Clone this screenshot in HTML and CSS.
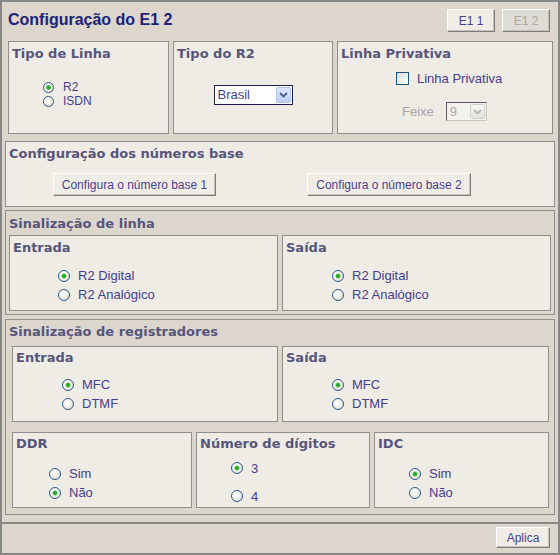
FILE: index.html
```html
<!DOCTYPE html>
<html lang="pt-BR">
<head>
<meta charset="utf-8">
<title>Configuração do E1 2</title>
<link rel="stylesheet" href="styles.css">
</head>
<body>
<div class="window">
  <header class="header">
    <h1 class="title">Configuração do E1 2</h1>
    <div class="tabs">
      <button class="btn btn-tab">E1 1</button>
      <button class="btn btn-tab" disabled>E1 2</button>
    </div>
  </header>

  <section class="row1">
    <div class="box">
      <h2 class="hd">Tipo de Linha</h2>
      <div class="opts opts-tight opts-tipo">
        <label class="opt"><input type="radio" name="tl" checked><span>R2</span></label>
        <label class="opt"><input type="radio" name="tl"><span>ISDN</span></label>
      </div>
    </div>
    <div class="box">
      <h2 class="hd">Tipo do R2</h2>
      <div class="select select-r2">
        <span class="sel-val">Brasil</span>
        <span class="sel-btn"><svg width="9" height="6" viewBox="0 0 9 6"><path d="M1 1 L4.5 4.5 L8 1" fill="none" stroke="#4a5f8c" stroke-width="1.8"/></svg></span>
      </div>
    </div>
    <div class="box">
      <h2 class="hd">Linha Privativa</h2>
      <label class="chk"><input type="checkbox"><span>Linha Privativa</span></label>
      <div class="feixe">
        <span class="feixe-lbl">Feixe</span>
        <div class="select select-dis">
          <span class="sel-val">9</span>
          <span class="sel-btn sel-btn-dis"><svg width="9" height="6" viewBox="0 0 9 6"><path d="M1 1 L4.5 4.5 L8 1" fill="none" stroke="#b8b8b8" stroke-width="1.8"/></svg></span>
        </div>
      </div>
    </div>
  </section>

  <section class="box wide base">
    <h2 class="hd">Configuração dos números base</h2>
    <div class="base-btns">
      <button class="btn btn-base">Configura o número base 1</button>
      <button class="btn btn-base btn-base2">Configura o número base 2</button>
    </div>
  </section>

  <section class="group linha">
    <h2 class="hd">Sinalização de linha</h2>
    <div class="pair">
      <div class="box sub">
        <h2 class="hd">Entrada</h2>
        <div class="opts opts-linha opts-l1">
          <label class="opt"><input type="radio" name="le" checked><span>R2 Digital</span></label>
          <label class="opt"><input type="radio" name="le"><span>R2 Analógico</span></label>
        </div>
      </div>
      <div class="box sub">
        <h2 class="hd">Saída</h2>
        <div class="opts opts-linha">
          <label class="opt"><input type="radio" name="ls" checked><span>R2 Digital</span></label>
          <label class="opt"><input type="radio" name="ls"><span>R2 Analógico</span></label>
        </div>
      </div>
    </div>
  </section>

  <section class="group regs">
    <h2 class="hd hd-regs">Sinalização de registradores</h2>
    <div class="pair pair-regs">
      <div class="box sub">
        <h2 class="hd">Entrada</h2>
        <div class="opts opts-regs">
          <label class="opt"><input type="radio" name="re" checked><span>MFC</span></label>
          <label class="opt"><input type="radio" name="re"><span>DTMF</span></label>
        </div>
      </div>
      <div class="box sub">
        <h2 class="hd">Saída</h2>
        <div class="opts opts-regs">
          <label class="opt"><input type="radio" name="rs" checked><span>MFC</span></label>
          <label class="opt"><input type="radio" name="rs"><span>DTMF</span></label>
        </div>
      </div>
    </div>
    <div class="triple">
      <div class="box sub">
        <h2 class="hd">DDR</h2>
        <div class="opts opts-ddr">
          <label class="opt"><input type="radio" name="ddr"><span>Sim</span></label>
          <label class="opt"><input type="radio" name="ddr" checked><span>Não</span></label>
        </div>
      </div>
      <div class="box sub">
        <h2 class="hd">Número de dígitos</h2>
        <div class="opts opts-dig">
          <label class="opt"><input type="radio" name="dig" checked><span>3</span></label>
          <label class="opt"><input type="radio" name="dig"><span>4</span></label>
        </div>
      </div>
      <div class="box sub">
        <h2 class="hd">IDC</h2>
        <div class="opts opts-idc">
          <label class="opt"><input type="radio" name="idc" checked><span>Sim</span></label>
          <label class="opt"><input type="radio" name="idc"><span>Não</span></label>
        </div>
      </div>
    </div>
  </section>

  <footer class="footer">
    <button class="btn btn-apply">Aplica</button>
  </footer>
</div>
</body>
</html>
```

FILE: styles.css
```css
html, body {
  margin: 0;
  padding: 0;
  background: #dcd6cc;
}

body {
  font-family: "Liberation Sans", Arial, sans-serif;
}

.window {
  width: 560px;
  height: 555px;
  box-sizing: border-box;
  border: 2px solid #878787;
  background: #dcd6cc;
  display: flex;
  flex-direction: column;
}

/* header */
.header {
  height: 39px;
  box-sizing: border-box;
  padding: 7px 8px 0 6px;
  display: flex;
  justify-content: space-between;
  align-items: flex-start;
}

.title {
  margin: 1px 0 0;
  font: bold 16px/19px "Liberation Sans", Arial, sans-serif;
  color: #1b237a;
}

.tabs {
  display: flex;
  gap: 7px;
}

/* buttons */
.btn {
  font: 12px/1 "Liberation Sans", Arial, sans-serif;
  color: #4b3f8c;
  background: #f0ede6;
  border: 1px solid;
  border-color: #ffffff #7c7c7c #7c7c7c #ffffff;
  box-shadow: inset -1px -1px 0 #c6c2b9;
  padding: 0;
  height: 23px;
  box-sizing: border-box;
  cursor: pointer;
}

.btn:disabled {
  background: #dedcd7;
  color: #a9a8a4;
  cursor: default;
}

.btn-tab {
  width: 48px;
}

/* generic boxes */
.box {
  background: #efebe5;
  border: 1px solid #8e8e8e;
  box-sizing: border-box;
  padding: 3px 3px 0;
}

.hd {
  margin: 0;
  font: bold 13px/17px "DejaVu Sans", Verdana, sans-serif;
  color: #56567c;
  white-space: nowrap;
}

/* radio lists */
.opts {
  display: flex;
  flex-direction: column;
}

.opt {
  display: flex;
  align-items: center;
  gap: 8px;
  height: 19px;
  font: 13px/19px "Liberation Sans", Arial, sans-serif;
  color: #45408a;
  white-space: nowrap;
}

.opt input {
  appearance: none;
  -webkit-appearance: none;
  flex: none;
  width: 12px;
  height: 12px;
  margin: 0;
  box-sizing: border-box;
  border: 1px solid #2a5a8c;
  border-radius: 50%;
  background: radial-gradient(circle at 35% 35%, #ffffff 0, #f3f2ec 45%, #d4d0c4 100%);
}

.opt input:checked {
  background:
    radial-gradient(circle, #1f9d1f 0, #31b031 1.6px, #8fd68f 2.4px, rgba(255,255,255,0) 3px),
    radial-gradient(circle at 35% 35%, #ffffff 0, #f3f2ec 45%, #d4d0c4 100%);
}

.opts-tight .opt {
  height: 14px;
  font-size: 12px;
  line-height: 14px;
  gap: 9px;
}

.opts-tight .opt input {
  width: 11px;
  height: 11px;
}

.opts-tipo { margin: 18px 0 0 31px; }
.opts-linha { margin: 10px 0 0 46px; }
.opts-l1 { margin-left: 45px; }
.opts-regs { margin: 9px 0 0 46px; }
.opts-ddr { margin: 12px 0 0 33px; }
.opts-idc { margin: 12px 0 0 31px; }
.opts-dig { margin: 2px 0 0 31px; }
.opts-dig .opt { height: 28px; }

/* row 1 */
.row1 {
  display: grid;
  grid-template-columns: 161px 160px 216px;
  gap: 4px;
  margin: 0 5px 0 6px;
  height: 93px;
}

.select {
  display: flex;
  align-items: center;
  box-sizing: border-box;
  height: 20px;
  border: 1px solid #1e1e4a;
  background: #ffffff;
}

.select-r2 {
  width: 79px;
  margin: 23px auto 0;
}

.sel-val {
  flex: 1;
  padding-left: 3px;
  font: 13px/16px "Liberation Sans", Arial, sans-serif;
  color: #45408a;
}

.sel-btn {
  flex: none;
  width: 15px;
  height: 16px;
  margin-right: 1px;
  box-sizing: border-box;
  border: 1px solid #b2c4f0;
  border-radius: 2px;
  background: linear-gradient(#dde7fd, #bccff8);
  display: flex;
  align-items: center;
  justify-content: center;
}

.chk {
  display: flex;
  align-items: center;
  gap: 8px;
  height: 13px;
  margin: 10px 0 0 55px;
  font: 13px/13px "Liberation Sans", Arial, sans-serif;
  color: #45408a;
  white-space: nowrap;
}

.chk input {
  appearance: none;
  -webkit-appearance: none;
  flex: none;
  width: 13px;
  height: 13px;
  margin: 0;
  box-sizing: border-box;
  border: 1px solid #1c5180;
  background: linear-gradient(135deg, #dcdbd4, #ffffff);
}

.feixe {
  display: flex;
  align-items: center;
  gap: 12px;
  margin: 17px 0 0 61px;
}

.feixe-lbl {
  font: 13px/19px "Liberation Sans", Arial, sans-serif;
  color: #a6a6a6;
}

.select-dis {
  width: 41px;
  height: 19px;
  border-color: #5c5c6c #c8c6bd #c8c6bd #5c5c6c;
  background: #f3f1ec;
}

.select-dis .sel-val {
  color: #a9a9a9;
}

.sel-btn-dis {
  height: 15px;
  border-color: #d2d1cb;
  background: linear-gradient(#f6f6f4, #e3e2dd);
}

/* wide sections */
.wide {
  margin: 0 3px;
}

.base {
  margin-top: 7px;
  height: 66px;
}

.base-btns {
  display: flex;
  gap: 91px;
  margin: 11px 0 0 44px;
}

.btn-base {
  width: 163px;
}

.btn-base2 {
  width: 164px;
}

.group {
  margin: 0 3px;
  border: 1px solid #8e8e8e;
  background: #dcd6cc;
  box-sizing: border-box;
}

.linha {
  margin-top: 3px;
  padding: 4px 3px 3px 3px;
}

.pair {
  display: grid;
  grid-template-columns: 269px 269px;
  gap: 4px;
  margin-top: 3px;
}

.sub {
  height: 76px;
}

.regs {
  margin-top: 4px;
  padding: 3px 5px 6px 6px;
}

.hd-regs {
  margin-left: -3px;
}

.pair-regs {
  grid-template-columns: 266px 267px;
  margin-top: 6px;
}

.regs .sub {
  padding-top: 2px;
}

.triple {
  display: grid;
  grid-template-columns: 180px 174px 175px;
  gap: 4px;
  margin-top: 10px;
}

/* footer */
.footer {
  margin-top: 7px;
  flex: 1;
  border-top: 2px solid #878787;
  display: flex;
  justify-content: flex-end;
  align-items: flex-start;
  padding: 3px 8px 0 0;
}

.btn-apply {
  width: 54px;
  height: 21px;
}
```
